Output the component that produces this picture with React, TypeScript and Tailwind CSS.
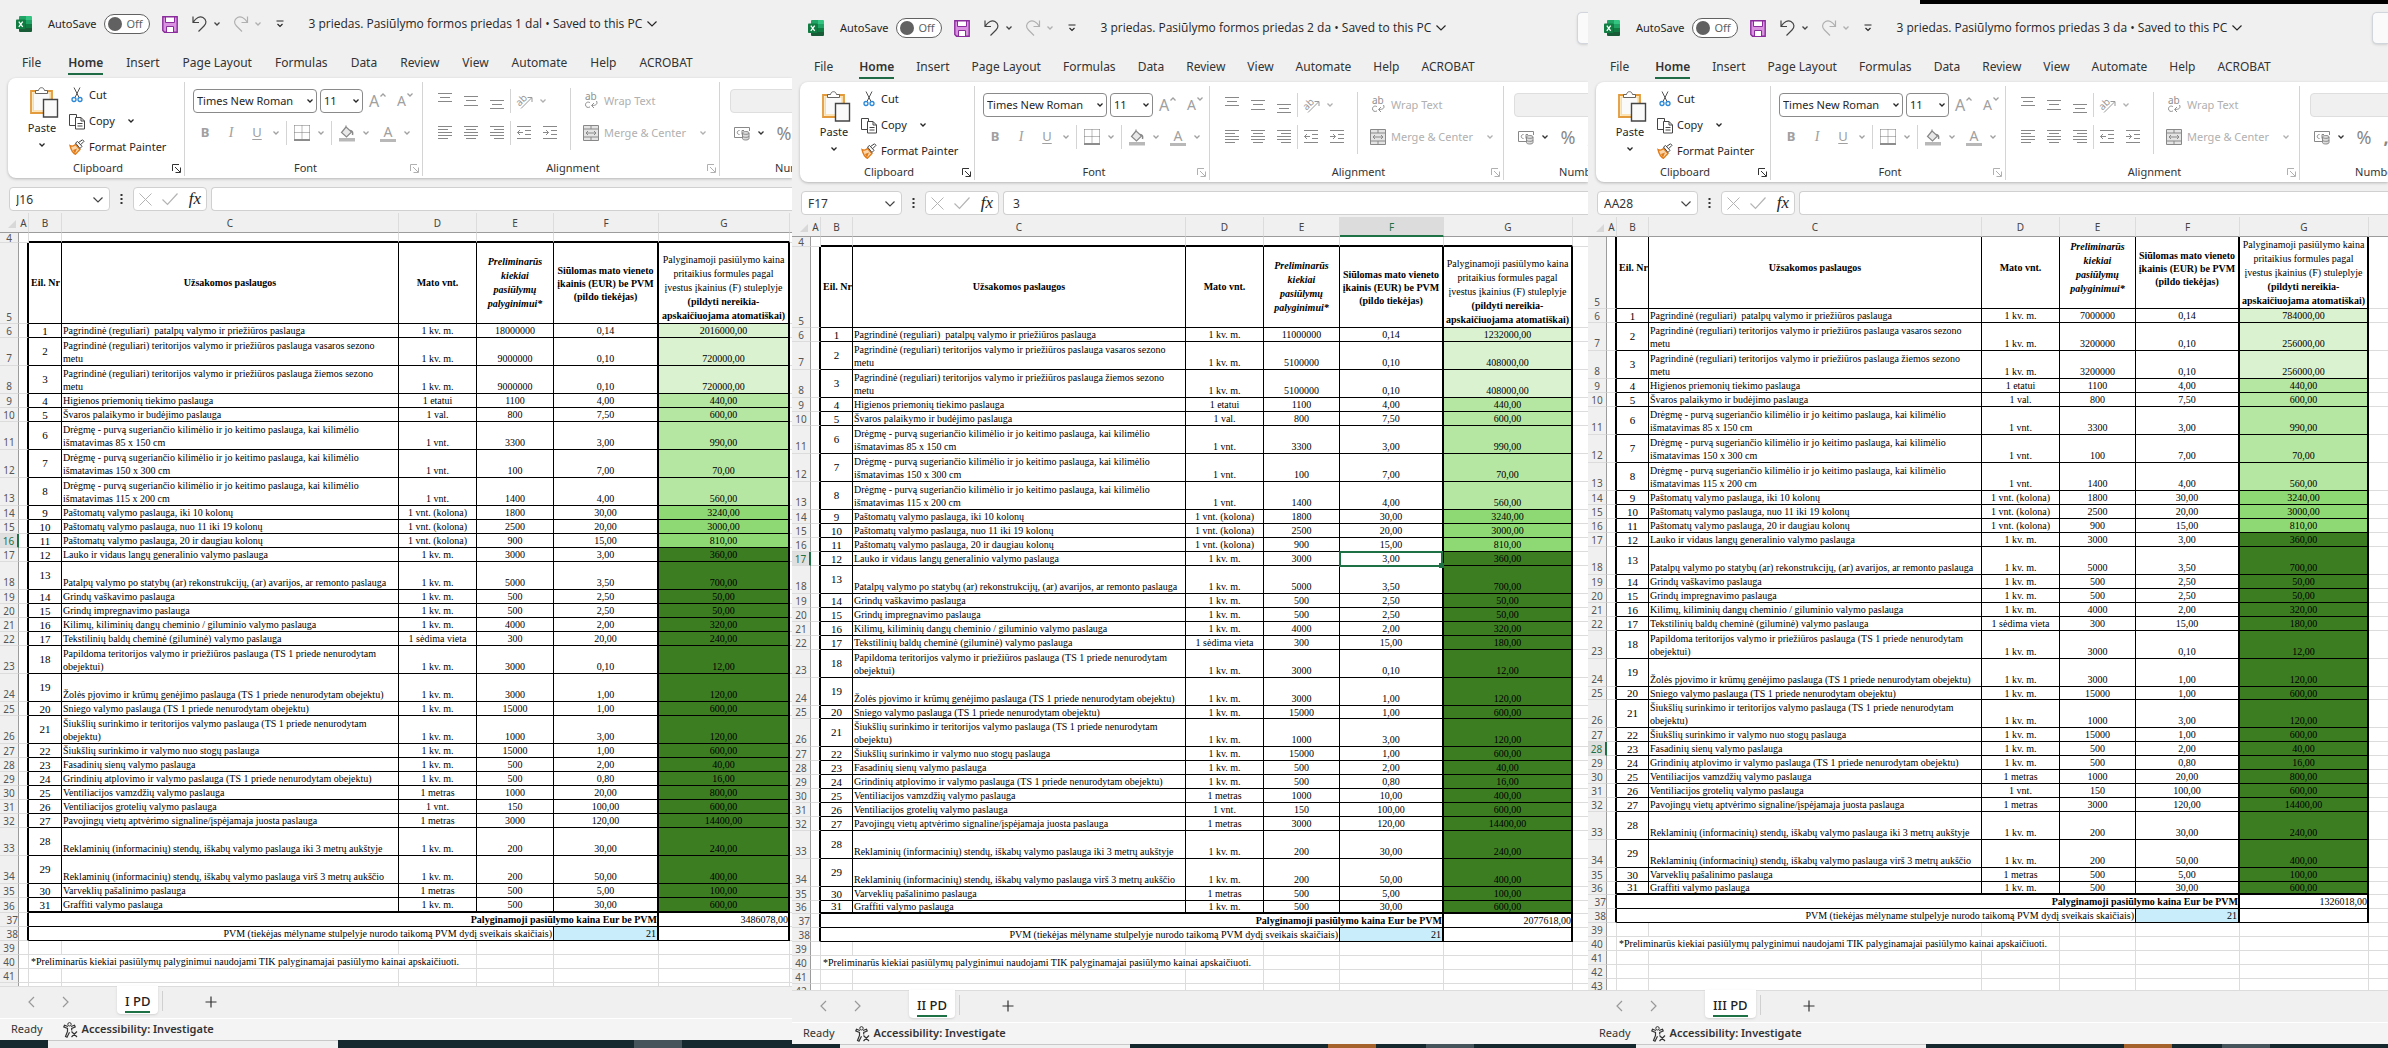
import type {ReactNode} from "react";
import {clsx} from "clsx";

type Tone = "pale" | "light" | "medium" | "dark";

interface ServiceRow {
  row: number;
  name: string;
  unit: string;
  qty: string;
  price: string;
  sum: string;
  tone: Tone;
  tall?: boolean;
}

interface Workbook {
  title: string;
  sheet: string;
  cell: string;
  formula: string;
  activeRow: number;
  activeCol?: string;
  total: string;
  scrolled?: boolean;
  compact?: boolean;
  frame: string;
  tabGap: string;
  search?: string;
  groups: {clipboard: string; font: string; alignment: string};
  cols: string[];
  tailRows: number[];
  taskbar: string;
  orange?: boolean;
  overrides: Record<number, Partial<ServiceRow>>;
}

const toneStyles: Record<Tone, string> = {
  pale: "bg-[#daf2d0]",
  light: "bg-[#b5e6a2]",
  medium: "bg-[#8ed973]",
  dark: "bg-[#3c7d22]",
};

const services: ServiceRow[] = [
  {row: 6, name: "Pagrindinė (reguliari)  patalpų valymo ir priežiūros paslauga", unit: "1 kv. m.", qty: "18000000", price: "0,14", sum: "2016000,00", tone: "pale"},
  {row: 7, name: "Pagrindinė (reguliari) teritorijos valymo ir priežiūros paslauga vasaros sezono\nmetu", unit: "1 kv. m.", qty: "9000000", price: "0,10", sum: "720000,00", tone: "pale", tall: true},
  {row: 8, name: "Pagrindinė (reguliari) teritorijos valymo ir priežiūros paslauga žiemos sezono\nmetu", unit: "1 kv. m.", qty: "9000000", price: "0,10", sum: "720000,00", tone: "pale", tall: true},
  {row: 9, name: "Higienos priemonių tiekimo paslauga", unit: "1 etatui", qty: "1100", price: "4,00", sum: "440,00", tone: "light"},
  {row: 10, name: "Švaros palaikymo ir budėjimo paslauga", unit: "1 val.", qty: "800", price: "7,50", sum: "600,00", tone: "light"},
  {row: 11, name: "Drėgmę - purvą sugeriančio kilimėlio ir jo keitimo paslauga, kai kilimėlio\nišmatavimas 85 x 150 cm", unit: "1 vnt.", qty: "3300", price: "3,00", sum: "990,00", tone: "light", tall: true},
  {row: 12, name: "Drėgmę - purvą sugeriančio kilimėlio ir jo keitimo paslauga, kai kilimėlio\nišmatavimas 150 x 300 cm", unit: "1 vnt.", qty: "100", price: "7,00", sum: "70,00", tone: "light", tall: true},
  {row: 13, name: "Drėgmę - purvą sugeriančio kilimėlio ir jo keitimo paslauga, kai kilimėlio\nišmatavimas 115 x 200 cm", unit: "1 vnt.", qty: "1400", price: "4,00", sum: "560,00", tone: "light", tall: true},
  {row: 14, name: "Paštomatų valymo paslauga, iki 10 kolonų", unit: "1 vnt. (kolona)", qty: "1800", price: "30,00", sum: "3240,00", tone: "medium"},
  {row: 15, name: "Paštomatų valymo paslauga, nuo 11 iki 19 kolonų", unit: "1 vnt. (kolona)", qty: "2500", price: "20,00", sum: "3000,00", tone: "medium"},
  {row: 16, name: "Paštomatų valymo paslauga, 20 ir daugiau kolonų", unit: "1 vnt. (kolona)", qty: "900", price: "15,00", sum: "810,00", tone: "medium"},
  {row: 17, name: "Lauko ir vidaus langų generalinio valymo paslauga", unit: "1 kv. m.", qty: "3000", price: "3,00", sum: "360,00", tone: "dark"},
  {row: 18, name: "Patalpų valymo po statybų (ar) rekonstrukcijų, (ar) avarijos, ar remonto paslauga", unit: "1 kv. m.", qty: "5000", price: "3,50", sum: "700,00", tone: "dark", tall: true},
  {row: 19, name: "Grindų vaškavimo paslauga", unit: "1 kv. m.", qty: "500", price: "2,50", sum: "50,00", tone: "dark"},
  {row: 20, name: "Grindų impregnavimo paslauga", unit: "1 kv. m.", qty: "500", price: "2,50", sum: "50,00", tone: "dark"},
  {row: 21, name: "Kilimų, kiliminių dangų cheminio / giluminio valymo paslauga", unit: "1 kv. m.", qty: "4000", price: "2,00", sum: "320,00", tone: "dark"},
  {row: 22, name: "Tekstilinių baldų cheminė (giluminė) valymo paslauga", unit: "1 sėdima vieta", qty: "300", price: "15,00", sum: "180,00", tone: "dark"},
  {row: 23, name: "Papildoma teritorijos valymo ir priežiūros paslauga (TS 1 priede nenurodytam\nobejektui)", unit: "1 kv. m.", qty: "3000", price: "0,10", sum: "12,00", tone: "dark", tall: true},
  {row: 24, name: "Žolės pjovimo ir krūmų genėjimo paslauga (TS 1 priede nenurodytam obejektu)", unit: "1 kv. m.", qty: "3000", price: "1,00", sum: "120,00", tone: "dark", tall: true},
  {row: 25, name: "Sniego valymo paslauga (TS 1 priede nenurodytam obejektu)", unit: "1 kv. m.", qty: "15000", price: "1,00", sum: "600,00", tone: "dark"},
  {row: 26, name: "Šiukšlių surinkimo ir teritorijos valymo paslauga (TS 1 priede nenurodytam\nobejektu)", unit: "1 kv. m.", qty: "1000", price: "3,00", sum: "120,00", tone: "dark", tall: true},
  {row: 27, name: "Šiukšlių surinkimo ir valymo nuo stogų paslauga", unit: "1 kv. m.", qty: "15000", price: "1,00", sum: "600,00", tone: "dark"},
  {row: 28, name: "Fasadinių sienų valymo paslauga", unit: "1 kv. m.", qty: "500", price: "2,00", sum: "40,00", tone: "dark"},
  {row: 29, name: "Grindinių atplovimo ir valymo paslauga (TS 1 priede nenurodytam obejektu)", unit: "1 kv. m.", qty: "500", price: "0,80", sum: "16,00", tone: "dark"},
  {row: 30, name: "Ventiliacijos vamzdžių valymo paslauga", unit: "1 metras", qty: "1000", price: "20,00", sum: "800,00", tone: "dark"},
  {row: 31, name: "Ventiliacijos grotelių valymo paslauga", unit: "1 vnt.", qty: "150", price: "100,00", sum: "600,00", tone: "dark"},
  {row: 32, name: "Pavojingų vietų aptvėrimo signaline/įspėjamaja juosta paslauga", unit: "1 metras", qty: "3000", price: "120,00", sum: "14400,00", tone: "dark"},
  {row: 33, name: "Reklaminių (informacinių) stendų, iškabų valymo paslauga iki 3 metrų aukštyje", unit: "1 kv. m.", qty: "200", price: "30,00", sum: "240,00", tone: "dark", tall: true},
  {row: 34, name: "Reklaminių (informacinių) stendų, iškabų valymo paslauga virš 3 metrų aukščio", unit: "1 kv. m.", qty: "200", price: "50,00", sum: "400,00", tone: "dark", tall: true},
  {row: 35, name: "Varveklių pašalinimo paslauga", unit: "1 metras", qty: "500", price: "5,00", sum: "100,00", tone: "dark"},
  {row: 36, name: "Graffiti valymo paslauga", unit: "1 kv. m.", qty: "500", price: "30,00", sum: "600,00", tone: "dark"},
];

const wideCols = ["w-[19px]", "w-[10px]", "w-[33px]", "w-[337px]", "w-[78px]", "w-[77px]", "w-[105px]", "w-[131px]", ""];
const narrowCols = ["w-[19px]", "w-[10px]", "w-[32px]", "w-[333px]", "w-[78px]", "w-[76px]", "w-[104px]", "w-[129px]", ""];
const narrowGroups = {clipboard: "w-[175px]", font: "w-[235px]", alignment: "w-[294px]"};

const workbooks: Workbook[] = [
  {
    title: "3 priedas. Pasiūlymo formos priedas 1 dal",
    sheet: "I PD",
    cell: "J16",
    formula: "",
    activeRow: 16,
    total: "3486078,00",
    frame: "",
    tabGap: "gap-[23px]",
    groups: {clipboard: "w-[177px]", font: "w-[238px]", alignment: "w-[297px]"},
    cols: wideCols,
    tailRows: [41, 42],
    taskbar: "h-2",
    overrides: {22: {price: "20,00", sum: "240,00"}},
  },
  {
    title: "3 priedas. Pasiūlymo formos priedas 2 da",
    sheet: "II PD",
    cell: "F17",
    formula: "3",
    activeRow: 17,
    activeCol: "F",
    total: "2077618,00",
    compact: true,
    frame: "pt-1",
    tabGap: "gap-[22px]",
    search: "w-[11px]",
    groups: narrowGroups,
    cols: narrowCols,
    tailRows: [41, 42],
    taskbar: "h-1",
    orange: true,
    overrides: {
      6: {qty: "11000000", sum: "1232000,00"},
      7: {qty: "5100000", sum: "408000,00"},
      8: {qty: "5100000", sum: "408000,00"},
      30: {price: "10,00", sum: "400,00"},
    },
  },
  {
    title: "3 priedas. Pasiūlymo formos priedas 3 da",
    sheet: "III PD",
    cell: "AA28",
    formula: "",
    activeRow: 28,
    total: "1326018,00",
    scrolled: true,
    compact: true,
    frame: "pt-1",
    tabGap: "gap-[22px]",
    search: "w-4",
    groups: narrowGroups,
    cols: narrowCols,
    tailRows: [41, 42, 43],
    taskbar: "h-1",
    orange: true,
    overrides: {
      6: {qty: "7000000", sum: "784000,00"},
      7: {qty: "3200000", sum: "256000,00"},
      8: {qty: "3200000", sum: "256000,00"},
    },
  },
];

function Svg({w, h, className, children}: {w: number; h: number; className?: string; children: ReactNode}) {
  return (
    <svg width={w} height={h} viewBox={`0 0 ${w} ${h}`} fill="none" stroke="currentColor" aria-hidden="true" className={clsx("shrink-0 overflow-visible", className)}>
      {children}
    </svg>
  );
}

function Caret({className}: {className?: string}) {
  return (
    <Svg w={8} h={6} className={className}>
      <path d="M1.5 1.5 4 4l2.500-2.500" strokeWidth="1.300" />
    </Svg>
  );
}

function WideCaret({className}: {className?: string}) {
  return (
    <Svg w={12} h={8} className={className}>
      <path d="M1.500 1.500 6 6l4.500-4.500" strokeWidth="1.200" />
    </Svg>
  );
}

function ExcelLogo() {
  return (
    <svg width="16" height="16" viewBox="0 0 16 16" aria-hidden="true" className="shrink-0">
      <path d="M4 0h6v8H3V1a1 1 0 0 1 1-1Z" fill="#21a366" />
      <path d="M10 0h5a1 1 0 0 1 1 1v3h-6Z" fill="#33c481" />
      <path d="M3 4h7v4H3z" fill="#107c41" />
      <path d="M10 4h6v4h-6z" fill="#21a366" />
      <path d="M3 8h7v8H4a1 1 0 0 1-1-1Z" fill="#185c37" />
      <path d="M10 8h6v4h-6z" fill="#107c41" />
      <path d="M10 12h6v3a1 1 0 0 1-1 1h-5z" fill="#185c37" />
      <rect y="3.500" width="9.500" height="9.500" rx="0.800" fill="#107c41" />
      <path d="m2.800 5.600 3.900 5.200M6.700 5.600l-3.900 5.200" stroke="#fff" strokeWidth="1.300" />
    </svg>
  );
}

function Launcher({className}: {className?: string}) {
  return (
    <button type="button" aria-label="More options" className={className}>
      <Svg w={9} h={9}>
        <path d="M.5 7V.5H7M3 3l5 5M8.500 3.500v5h-5" />
      </Svg>
    </button>
  );
}

function TitleBar({book}: {book: Workbook}) {
  return (
    <header className="flex h-12 shrink-0 items-center pl-4 text-[11px] text-[#262626]">
      <ExcelLogo />
      <label className="ml-4 flex items-center gap-2">
        AutoSave
        <input type="checkbox" role="switch" className="sr-only" />
        <span className="flex h-5 w-[46px] items-center gap-1 rounded-full border border-[#616161] bg-white pl-[3px] text-[#616161]">
          <span className="size-[14px] rounded-full bg-[#616161]" />
          Off
        </span>
      </label>
      <button type="button" aria-label="Save" className="ml-3">
        <Svg w={16} h={17}>
          <path d="M.8.800h14.400v15.400H2.500L.8 14.500Z" fill="#d993e0" stroke="#8a2c9b" strokeWidth="1.400" />
          <path d="M3.500 1h9v5.500h-9z" fill="#fff" stroke="#8a2c9b" />
          <path d="M4.500 16v-5.500h7V16" fill="#fff" stroke="#8a2c9b" />
        </Svg>
      </button>
      <button type="button" aria-label="Undo" className="ml-[14px] flex items-center gap-[5px] text-[#444]">
        <Svg w={16} h={18}>
          <path d="M1 1.500v6h6M1.200 7.300C4 2.500 8 .800 11 2.500c4 2.300 3.500 6 1 8.500l-5.500 5.500" strokeWidth="1.200" />
        </Svg>
        <Caret />
      </button>
      <button type="button" aria-label="Redo" disabled className="ml-3 flex items-center gap-[5px] text-[#b0b0b0]">
        <Svg w={16} h={18}>
          <path d="M14.500 1.500v6h-6M14.300 7.300C11.500 2.500 7.500.800 4.500 2.500c-4 2.300-3.500 6-1 8.500L9 16.500" strokeWidth="1.200" />
        </Svg>
        <Caret />
      </button>
      <button type="button" aria-label="Customize toolbar" className="ml-[14px]">
        <Svg w={8} h={8}>
          <path d="M.5 1h7M1.500 4 4 6.500 6.500 4" strokeWidth="1.200" />
        </Svg>
      </button>
      <button type="button" className="ml-6 flex items-center gap-1 font-['Open_Sans',sans-serif] text-xs whitespace-nowrap">
        {book.title} • Saved to this PC
        <WideCaret />
      </button>
      {book.search === undefined ? null : (
        <span className={clsx("ml-auto h-8 rounded-l-[5px] border border-r-0 border-gray-300 bg-[#fafafa] shadow-sm", book.search)} />
      )}
    </header>
  );
}

const tabs = ["File", "Home", "Insert", "Page Layout", "Formulas", "Data", "Review", "View", "Automate", "Help", "ACROBAT"];

function TabBar({gap}: {gap: string}) {
  return (
    <nav className={clsx("flex h-[30px] shrink-0 items-center pl-[22px] text-xs whitespace-nowrap text-[#333]", gap)}>
      {tabs.map((tab) => (
        <a
          key={tab}
          href={`#${tab.toLowerCase().replace(" ", "-")}`}
          className={clsx(
            "flex h-[24px] items-center border-y-2 border-transparent",
            tab === "Home" && "ml-1 border-b-[#1e6b45]! font-semibold"
          )}>
          {tab}
        </a>
      ))}
    </nav>
  );
}

function Group({label, width, launcher, children}: {label: string; width: string; launcher?: string; children: ReactNode}) {
  return (
    <section className={clsx("flex shrink-0 flex-col py-1", width)}>
      <div className="flex flex-1 flex-col border-r border-[#d4d4d4]">
        <div className="h-[78px]">{children}</div>
        <div className="flex h-4 items-center text-[11px] text-[#333]">
          <span className="flex-1 pl-4 text-center">{label}</span>
          <Launcher className={clsx("mr-[3px]", launcher)} />
        </div>
      </div>
    </section>
  );
}

function Tool({label, width = "w-6", children}: {label: string; width?: string; children: ReactNode}) {
  return (
    <button type="button" aria-label={label} className={clsx("flex h-6 items-center justify-center", width)}>
      {children}
    </button>
  );
}

function Divider() {
  return <span className="mx-[3px] h-6 w-px bg-[#d4d4d4]" />;
}

function ClipboardGroup({width}: {width: string}) {
  return (
    <Group label="Clipboard" width={width} launcher="text-[#333]">
      <div className="flex text-[11px] text-[#262626]">
        <button type="button" className="ml-4 flex w-10 flex-col items-center pt-[5px]">
          <Svg w={28} h={31}>
            <path d="M1 4h21v22H1z" fill="#fff" stroke="#e39a3b" strokeWidth="1.800" />
            <path d="M3.200 6h17v18h-17z" fill="#fafafa" stroke="#fbdca0" strokeWidth="1.600" />
            <path d="M5.500 6.500V3.500h3C9 1.500 10 .700 11.500.700s2.500.800 3 2.800h3v3Z" fill="#fff" stroke="#666" />
            <path d="M13.500 12.500h14v17.500h-14z" fill="#fafafa" stroke="#444" strokeWidth="1.400" />
          </Svg>
          <span className="pr-1 leading-5">Paste</span>
          <Caret className="mt-1 mr-1" />
        </button>
        <div className="ml-[5px] flex flex-col">
          <button type="button" className="flex h-[26px] items-center gap-1">
            <Svg w={16} h={16}>
              <path d="m5 .5 5 10M11 .500l-5 10" stroke="#555" />
              <circle cx="5" cy="12.500" r="2" stroke="#2b88d8" strokeWidth="1.300" />
              <circle cx="11" cy="12.500" r="2" stroke="#2b88d8" strokeWidth="1.300" />
            </Svg>
            Cut
          </button>
          <button type="button" className="flex h-[26px] items-center gap-1">
            <Svg w={16} h={17} className="text-[#444]">
              <path d="M6 12.500H.500V1.500h7V4" />
              <path d="M6.500 4.500H12l3.500 3.500v8h-9Z" fill="#fff" />
              <path d="M12 4.500V8h3.500M8.500 10.500h5M8.500 13h5" />
            </Svg>
            Copy
            <Caret className="ml-2" />
          </button>
          <button type="button" className="flex h-[26px] items-center gap-1 whitespace-nowrap">
            <Svg w={16} h={16}>
              <path d="M1 6.500c2 1 4 .500 5.500-1l4.500 5-4.500 4.800C4 14 2 11 1 6.500Z" fill="#fbd5a8" stroke="#e07b1a" strokeWidth="1.300" />
              <path d="m4 11 4-1.500-2 5Z" fill="#e07b1a" stroke="none" />
              <path d="m6.500 4 2-1.500 4.500 4.800L11 9.500ZM9.500 3.500 13.500.800l1.500 1.500-3.500 3.500" fill="#fff" stroke="#444" />
            </Svg>
            Format Painter
          </button>
        </div>
      </div>
    </Group>
  );
}

function FontGroup({width}: {width: string}) {
  return (
    <Group label="Font" width={width} launcher="text-[#b0b0b0]">
      <div className="pt-[7px] pl-2 text-[#a0a0a0]">
        <div className="flex items-center">
          <div className="relative w-[124px] text-[#262626]">
            <select aria-label="Font" className="block h-6 w-full appearance-none rounded border border-[#8a8a8a] bg-white pl-[3px] text-[11px]">
              <option>Times New Roman</option>
            </select>
            <Caret className="pointer-events-none absolute top-[9px] right-[3px]" />
          </div>
          <div className="relative ml-[3px] w-[43px] text-[#262626]">
            <select aria-label="Font size" className="block h-6 w-full appearance-none rounded border border-[#8a8a8a] bg-white pl-[3px] text-[11px]">
              <option>11</option>
            </select>
            <Caret className="pointer-events-none absolute top-[9px] right-[3px]" />
          </div>
          <button type="button" aria-label="Grow font" className="ml-[6px] flex w-[22px] text-base leading-6">
            A<Caret className="mt-[3px] rotate-180" />
          </button>
          <button type="button" aria-label="Shrink font" className="ml-[6px] flex w-[22px] text-sm leading-6">
            A<Caret className="mt-[3px]" />
          </button>
        </div>
        <div className="mt-2 flex items-center text-[13px]">
          <Tool label="Bold"><b>B</b></Tool>
          <Tool label="Italic" width="w-7"><i className="font-['Liberation_Serif',serif] text-sm">I</i></Tool>
          <Tool label="Underline"><u className="underline-offset-2">U</u></Tool>
          <Tool label="Underline style" width="w-[14px]"><Caret /></Tool>
          <Divider />
          <Tool label="Borders">
            <Svg w={16} h={16}>
              <path d="M.5.500h15M.500.500v14M15.500.500v14M8 .500v14M.500 7.500h15" strokeDasharray="1 1" stroke="#777" />
              <path d="M0 15h16" stroke="#666" strokeWidth="1.500" />
            </Svg>
          </Tool>
          <Tool label="Border style" width="w-[14px]"><Caret /></Tool>
          <Divider />
          <Tool label="Fill color">
            <Svg w={16} h={17}>
              <path d="m7 2-4.500 5.500L7.500 12l5-5L7 2V.500" fill="#e8e8e8" stroke="#888" strokeWidth="1.200" />
              <path d="M11 5.500c2.500 0 3 2 2.500 4.500" stroke="#888" strokeWidth="1.500" />
              <path d="M0 13h16v3.500H0z" fill="#b8b8b8" stroke="none" />
            </Svg>
          </Tool>
          <Tool label="Fill colors" width="w-[14px]"><Caret /></Tool>
          <span className="w-[3px]" />
          <Tool label="Font color">
            <span className="flex w-4 flex-col items-center border-b-[3px] border-[#b8b8b8] text-sm leading-[14px]">A</span>
          </Tool>
          <Tool label="Font colors" width="w-[14px]"><Caret /></Tool>
        </div>
      </div>
    </Group>
  );
}

function Lines({d}: {d: string}) {
  return (
    <Svg w={14} h={18} className="text-[#888]">
      <path d={d} />
    </Svg>
  );
}

function AlignmentGroup({width}: {width: string}) {
  return (
    <Group label="Alignment" width={width} launcher="text-[#b0b0b0]">
      <div className="flex pl-[9px] text-[#b0b0b0]">
        <div className="w-[138px] pt-[7px]">
          <div className="flex items-center">
            <Tool label="Top align" width="w-[26px]"><Lines d="M0 1.500h14M2 5.500h10M0 9.500h14" /></Tool>
            <Tool label="Middle align" width="w-[26px]"><Lines d="M0 4.500h14M2 8.500h10M0 13.500h14" /></Tool>
            <Tool label="Bottom align" width="w-[26px]"><Lines d="M0 8.500h14M2 12.500h10M0 16.500h14" /></Tool>
            <span className="h-6 w-px bg-[#d4d4d4]" />
            <Tool label="Orientation" width="w-7">
              <Svg w={18} h={18} className="text-[#999]">
                <text x="0" y="12" transform="rotate(-45 5 9)" fontSize="10" fill="currentColor" stroke="none">ab</text>
                <path d="M5 16.500 15.500 6M11.500 5.500h4.500V10" />
              </Svg>
            </Tool>
            <Caret />
          </div>
          <div className="mt-2 flex items-center">
            <Tool label="Align left" width="w-[26px]"><Lines d="M0 2.500h14M0 5.500h10M0 8.500h14M0 11.500h14M0 14.500h10" /></Tool>
            <Tool label="Center" width="w-[26px]"><Lines d="M0 2.500h14M2 5.500h10M0 8.500h14M0 11.500h14M2 14.500h10" /></Tool>
            <Tool label="Align right" width="w-[26px]"><Lines d="M0 2.500h14M4 5.500h10M0 8.500h14M0 11.500h14M4 14.500h10" /></Tool>
            <span className="h-6 w-px bg-[#d4d4d4]" />
            <Tool label="Decrease indent" width="w-[26px]"><Lines d="M0 2.500h14M8 6.500h6M8 10.500h6M0 14.500h14M6 8.500H.500M3 6 .500 8.500 3 11" /></Tool>
            <Tool label="Increase indent" width="w-[26px]"><Lines d="M0 2.500h14M8 6.500h6M8 10.500h6M0 14.500h14M0 8.500h5.500M3 6l2.500 2.500L3 11" /></Tool>
          </div>
        </div>
        <span className="mt-[6px] h-[62px] w-px bg-[#d4d4d4]" />
        <div className="pt-[7px] pl-3 text-[11px] whitespace-nowrap">
          <button type="button" className="flex h-6 items-center gap-[5px]">
            <Svg w={16} h={18} className="text-[#909090]">
              <text x="2" y="8" fontSize="10" fill="currentColor" stroke="none">ab</text>
              <path d="M7 10.700c-2.200-1.400-4.500-.200-4.500 2.100s2.300 3.400 4.500 2.100M13.500 9c1.500 3-.500 4.500-4.500 4.500M11 11l-2.500 2.500L11 16" />
            </Svg>
            Wrap Text
          </button>
          <button type="button" className="mt-2 flex h-6 items-center gap-[5px]">
            <Svg w={16} h={16} className="text-[#888]">
              <path d="M.500.500h15v15H.500z" fill="#e4e4e4" />
              <path d="M.500 4h15M.500 12h15M8 .500V4M8 12v3.500" />
              <path d="M3 8h10M5 6 3 8l2 2M11 6l2 2-2 2" />
            </Svg>
            Merge &amp; Center
            <Caret className="ml-2" />
          </button>
        </div>
      </div>
    </Group>
  );
}

function NumberGroup() {
  return (
    <Group label="Number" width="w-[150px]">
      <div className="pt-[7px] pl-[10px] text-[#888]">
        <select aria-label="Number format" disabled className="block h-6 w-[130px] appearance-none rounded border border-[#dedede] bg-[#f0f0f0]" />
        <div className="mt-2 flex items-center text-lg">
          <Tool label="Accounting format">
            <Svg w={17} h={16}>
              <path d="M8 12.500H.500v-10h15V6" />
              <path d="M5.500 5.500c-3 0-3 4 0 4M8 9.500v-4h2" />
              <path d="M8.500 8v5.500c0 2 6.500 2 6.500 0V8c0-2-6.500-2-6.500 0Zm0 0c0 1.800 6.500 1.800 6.500 0M8.500 11c0 1.800 6.500 1.800 6.500 0" fill="#ddd" />
            </Svg>
          </Tool>
          <Tool label="Accounting styles" width="w-[14px]"><Caret className="text-[#333]" /></Tool>
          <Tool label="Percent" width="w-8">%</Tool>
          <Tool label="Comma" width="w-3"><b>,</b></Tool>
        </div>
      </div>
    </Group>
  );
}

function FormulaBar({book}: {book: Workbook}) {
  return (
    <div className="flex shrink-0 items-center pt-[9px] pb-[2px] pl-[9px]">
      <div className="relative w-[101px]">
        <input aria-label="Name box" defaultValue={book.cell} className="block h-6 w-full rounded border border-[#d0d0d0] bg-white pl-[6px] text-xs text-[#333]" />
        <WideCaret className="pointer-events-none absolute top-[9px] right-[6px] text-[#444]" />
      </div>
      <Svg w={3} h={12} className="mx-[10px] text-[#333]">
        <path d="M1.500 1v10" strokeWidth="2" strokeDasharray="2 2" />
      </Svg>
      <div className="flex h-6 w-[74px] items-center justify-between rounded border border-[#d0d0d0] bg-white px-[5px] text-[#b4b4b4]">
        <button type="button" aria-label="Cancel">
          <Svg w={13} h={13}><path d="m.5.500 12 12M12.500.500l-12 12" /></Svg>
        </button>
        <button type="button" aria-label="Enter">
          <Svg w={16} h={12}><path d="m.5 6.500 5 5 10-11" strokeWidth="1.200" /></Svg>
        </button>
        <button type="button" aria-label="Insert function" className="font-['Liberation_Serif',serif] text-[17px] leading-5 text-[#222] italic">
          fx
        </button>
      </div>
      <input aria-label="Formula" defaultValue={book.formula} className="ml-1 block h-6 min-w-0 flex-1 rounded-l border border-r-0 border-[#d0d0d0] bg-white pl-[9px] text-xs text-[#333]" />
    </div>
  );
}

const gridLine = "border-r border-b border-[#dcdcdc]";
const cellLine = "border-r border-b border-black";

function RowHead({row, active}: {row: number; active?: boolean}) {
  return (
    <th
      scope="row"
      className={clsx(
        "border-b border-b-[#dcdcdc] align-bottom font-['Noto_Sans',sans-serif] font-normal",
        active ? "border-r-2 border-r-[#1e7145] bg-[#e0e0e0] text-[#1e7145]" : "border-r border-r-[#9c9c9c] bg-[#f0f0f0] text-[#555]"
      )}>
      {row}
    </th>
  );
}

function EmptyRow({row, height = "h-[14px]", bottom}: {row: number; height?: string; bottom?: string}) {
  return (
    <tr className={height}>
      <RowHead row={row} />
      <td className={gridLine} />
      {["B", "C", "D", "E", "F", "G"].map((col) => (
        <td key={col} className={clsx(gridLine, bottom)} />
      ))}
      <td className="border-b border-[#dcdcdc]" />
    </tr>
  );
}

function Sheet({book}: {book: Workbook}) {
  const rows = services.map((service) => ({...service, ...book.overrides[service.row]}));
  const heading = clsx(cellLine, "font-bold", book.scrolled && "pb-[9px]");

  return (
    <div className="min-h-0 flex-1 overflow-hidden bg-white">
      <table className="w-full table-fixed border-separate border-spacing-0 font-['Liberation_Serif',serif] text-[10px] leading-3 whitespace-pre text-black">
        <colgroup>
          {book.cols.map((width, i) => (
            <col key={i} className={width} />
          ))}
        </colgroup>
        <thead>
          <tr className="h-5 bg-[#f0f0f0] font-['Noto_Sans',sans-serif] text-[#444]">
            <td className="border-b border-[#9c9c9c] align-bottom">
              <Svg w={8} h={8} className="mb-1 ml-2">
                <path d="M8 0v8H0z" fill="#d8d8d8" stroke="none" />
              </Svg>
            </td>
            {["A", "B", "C", "D", "E", "F", "G"].map((col) => (
              <th
                key={col}
                scope="col"
                className={clsx(
                  "border-r border-r-[#dcdcdc] pt-px font-normal",
                  col === book.activeCol ? "border-b-2 border-b-[#1e7145] bg-[#dcdcdc] text-[#1e7145]" : "border-b border-b-[#9c9c9c]"
                )}>
                {col}
              </th>
            ))}
            <td className="border-b border-[#9c9c9c]" />
          </tr>
        </thead>
        <tbody>
          {book.scrolled ? null : <EmptyRow row={4} height="h-[10px] leading-[8px]" bottom="border-b-2 border-b-black" />}
          <tr className={book.scrolled ? "h-[72px]" : "h-[81px]"}>
            <RowHead row={5} />
            <td className="border-r-2 border-b border-r-black border-b-[#dcdcdc]" />
            <th className={clsx(heading, "overflow-hidden pl-[2px] text-left")}>Eil. Nr</th>
            <th className={heading}>Užsakomos paslaugos</th>
            <th className={heading}>Mato vnt.</th>
            <th className={clsx(heading, "leading-[14px] italic")}>{"Preliminarūs\nkiekiai\npasiūlymų\npalyginimui*"}</th>
            <th className={clsx(heading, "border-r-2 leading-[13px]")}>{"Siūlomas mato vieneto\nįkainis (EUR) be PVM\n(pildo tiekėjas)"}</th>
            <th className="border-r-2 border-b border-black align-bottom leading-[14px] font-normal">
              {"Palyginamoji pasiūlymo kaina\npritaikius formules pagal\nįvestus įkainius (F) stuleplyje\n"}
              <b>{"(pildyti nereikia-\napskaičiuojama atomatiškai)"}</b>
            </th>
            <td className="border-b border-[#dcdcdc]" />
          </tr>
          {rows.map((item, i) => {
            const last = item.row === 36;
            const short = book.compact && (item.row === 25 || last);
            const cell = clsx("border-black align-bottom", last ? "border-b-2" : "border-b");
            const selected = book.activeCol === "F" && item.row === book.activeRow;
            return (
              <tr key={item.row} className={clsx("text-center", item.tall ? "h-[28px] leading-[13px]" : short ? "h-[13px] leading-[11px]" : last ? "h-[15px]" : "h-[14px]")}>
                <RowHead row={item.row} active={item.row === book.activeRow} />
                <td className="border-r-2 border-b border-r-black border-b-[#dcdcdc]" />
                <td className={clsx(cell, "border-r align-middle! text-[11px]")}>{i + 1}</td>
                <td className={clsx(cell, "border-r pl-px text-left")}>{item.name}</td>
                <td className={clsx(cell, "border-r")}>{item.unit}</td>
                <td className={clsx(cell, "border-r")}>{item.qty}</td>
                <td className={clsx(cell, "border-r-2", selected && "relative")}>
                  {item.price}
                  {selected ? (
                    <span className="absolute -inset-x-px -top-px -bottom-[2px] border-2 border-[#1e7145]">
                      <span className="absolute -right-[3px] -bottom-[3px] size-[5px] bg-[#1e7145]" />
                    </span>
                  ) : null}
                </td>
                <td className={clsx(cell, "border-r-2", toneStyles[item.tone])}>{item.sum}</td>
                <td className="border-b border-[#dcdcdc]" />
              </tr>
            );
          })}
          <tr className="h-[14px] text-right">
            <RowHead row={37} />
            <td className="border-r-2 border-b border-r-black border-b-[#dcdcdc]" />
            <td colSpan={5} className="border-r-2 border-b border-black font-bold">Palyginamoji pasiūlymo kaina Eur be PVM</td>
            <td className="border-r-2 border-b border-black">{book.total}</td>
            <td className="border-b border-[#dcdcdc]" />
          </tr>
          <tr className="h-[14px] text-right">
            <RowHead row={38} />
            <td className="border-r-2 border-b border-r-black border-b-[#dcdcdc]" />
            <td colSpan={4} className={clsx(cellLine, "pr-px")}>PVM (tiekėjas mėlyname stulpelyje nurodo taikomą PVM dydį sveikais skaičiais)</td>
            <td className="border-r-2 border-b border-black bg-[#caedfb] pr-px">21</td>
            <td className="border-r-2 border-b border-black" />
            <td className="border-b border-[#dcdcdc]" />
          </tr>
          <EmptyRow row={39} />
          <tr className="h-[14px]">
            <RowHead row={40} />
            <td className={gridLine} />
            <td colSpan={3} className={clsx(gridLine, "pl-[2px]")}>*Preliminarūs kiekiai pasiūlymų palyginimui naudojami TIK palyginamajai pasiūlymo kainai apskaičiuoti.</td>
            <td className={gridLine} />
            <td className={gridLine} />
            <td className={gridLine} />
            <td className="border-b border-[#dcdcdc]" />
          </tr>
          {book.tailRows.map((row) => (
            <EmptyRow key={row} row={row} />
          ))}
        </tbody>
      </table>
    </div>
  );
}

function SheetTabs({name}: {name: string}) {
  return (
    <div className="flex h-8 shrink-0 items-start border-t border-[#dcdcdc] pl-7 text-[#999]">
      <button type="button" aria-label="Previous sheet" className="mt-[9px]">
        <Svg w={7} h={12}><path d="M6 1 1 6l5 5" strokeWidth="1.200" /></Svg>
      </button>
      <button type="button" aria-label="Next sheet" className="mt-[9px] ml-[27px]">
        <Svg w={7} h={12}><path d="m1 1 5 5-5 5" strokeWidth="1.200" /></Svg>
      </button>
      <button type="button" className="-mt-px ml-12 h-7 rounded-b bg-white px-2 text-[13px] leading-5 font-medium text-[#222] shadow-sm">
        <span className="block border-b-2 border-[#1e7145] pt-[3px]">{name}</span>
      </button>
      <span className="mt-1 ml-1 h-5 w-px bg-[#d0d0d0]" />
      <button type="button" aria-label="New sheet" className="mt-[9px] ml-[42px] text-[#333]">
        <Svg w={12} h={12}><path d="M6 .500v11M.500 6h11" strokeWidth="1.200" /></Svg>
      </button>
    </div>
  );
}

function StatusBar() {
  return (
    <footer className="flex h-[22px] shrink-0 items-center border-t border-white bg-[#f4f4f4] pl-[11px] text-[11px] text-[#333]">
      Ready
      <button type="button" className="ml-5 flex items-center gap-1 font-semibold">
        <Svg w={15} h={16}>
          <circle cx="6.500" cy="2.300" r="1.700" />
          <path d="M5 4.500 1.500 3.300.800 5l3.700 1.500v3L2.500 14.500l1.500.800 2.500-5M8 4.500l3.500-1.200.700 1.700-3.500 1.500v2M8.500 9.500l5.500 5.500M14 9.500 8.500 15" strokeWidth="1.200" />
        </Svg>
        Accessibility: Investigate
      </button>
    </footer>
  );
}

function ExcelWindow({book}: {book: Workbook}) {
  return (
    <section className="flex min-w-0 flex-col overflow-hidden bg-[#f0f0f0]">
      <div className={clsx("flex min-h-0 flex-1 flex-col", book.frame)}>
        <TitleBar book={book} />
        <TabBar gap={book.tabGap} />
        <div className="ml-2 flex h-[100px] shrink-0 rounded-l-lg bg-white shadow-[0_1px_3px_rgba(0,0,0,0.25)]">
          <ClipboardGroup width={book.groups.clipboard} />
          <FontGroup width={book.groups.font} />
          <AlignmentGroup width={book.groups.alignment} />
          <NumberGroup />
        </div>
        <FormulaBar book={book} />
        <Sheet book={book} />
        <SheetTabs name={book.sheet} />
        <StatusBar />
      </div>
      <div className={clsx("flex shrink-0 bg-[#14282d]", book.taskbar)}>
        <span className="ml-12 w-[290px] border-t border-[#c8c8c8] bg-[#f0f0f0]" />
        <span className={clsx("ml-[198px] w-12", book.orange && "bg-[#a5622b]")} />
        <span className="ml-[50px] w-12 bg-[#45545a]" />
      </div>
    </section>
  );
}

export default function App() {
  return (
    <main className="relative grid h-screen grid-cols-[792fr_796fr_800fr] grid-rows-1 overflow-hidden font-['Noto_Sans',sans-serif]">
      {workbooks.map((book) => (
        <ExcelWindow key={book.sheet} book={book} />
      ))}
      <div className="absolute top-0 right-0 h-1 w-[468px] bg-black" />
    </main>
  );
}
